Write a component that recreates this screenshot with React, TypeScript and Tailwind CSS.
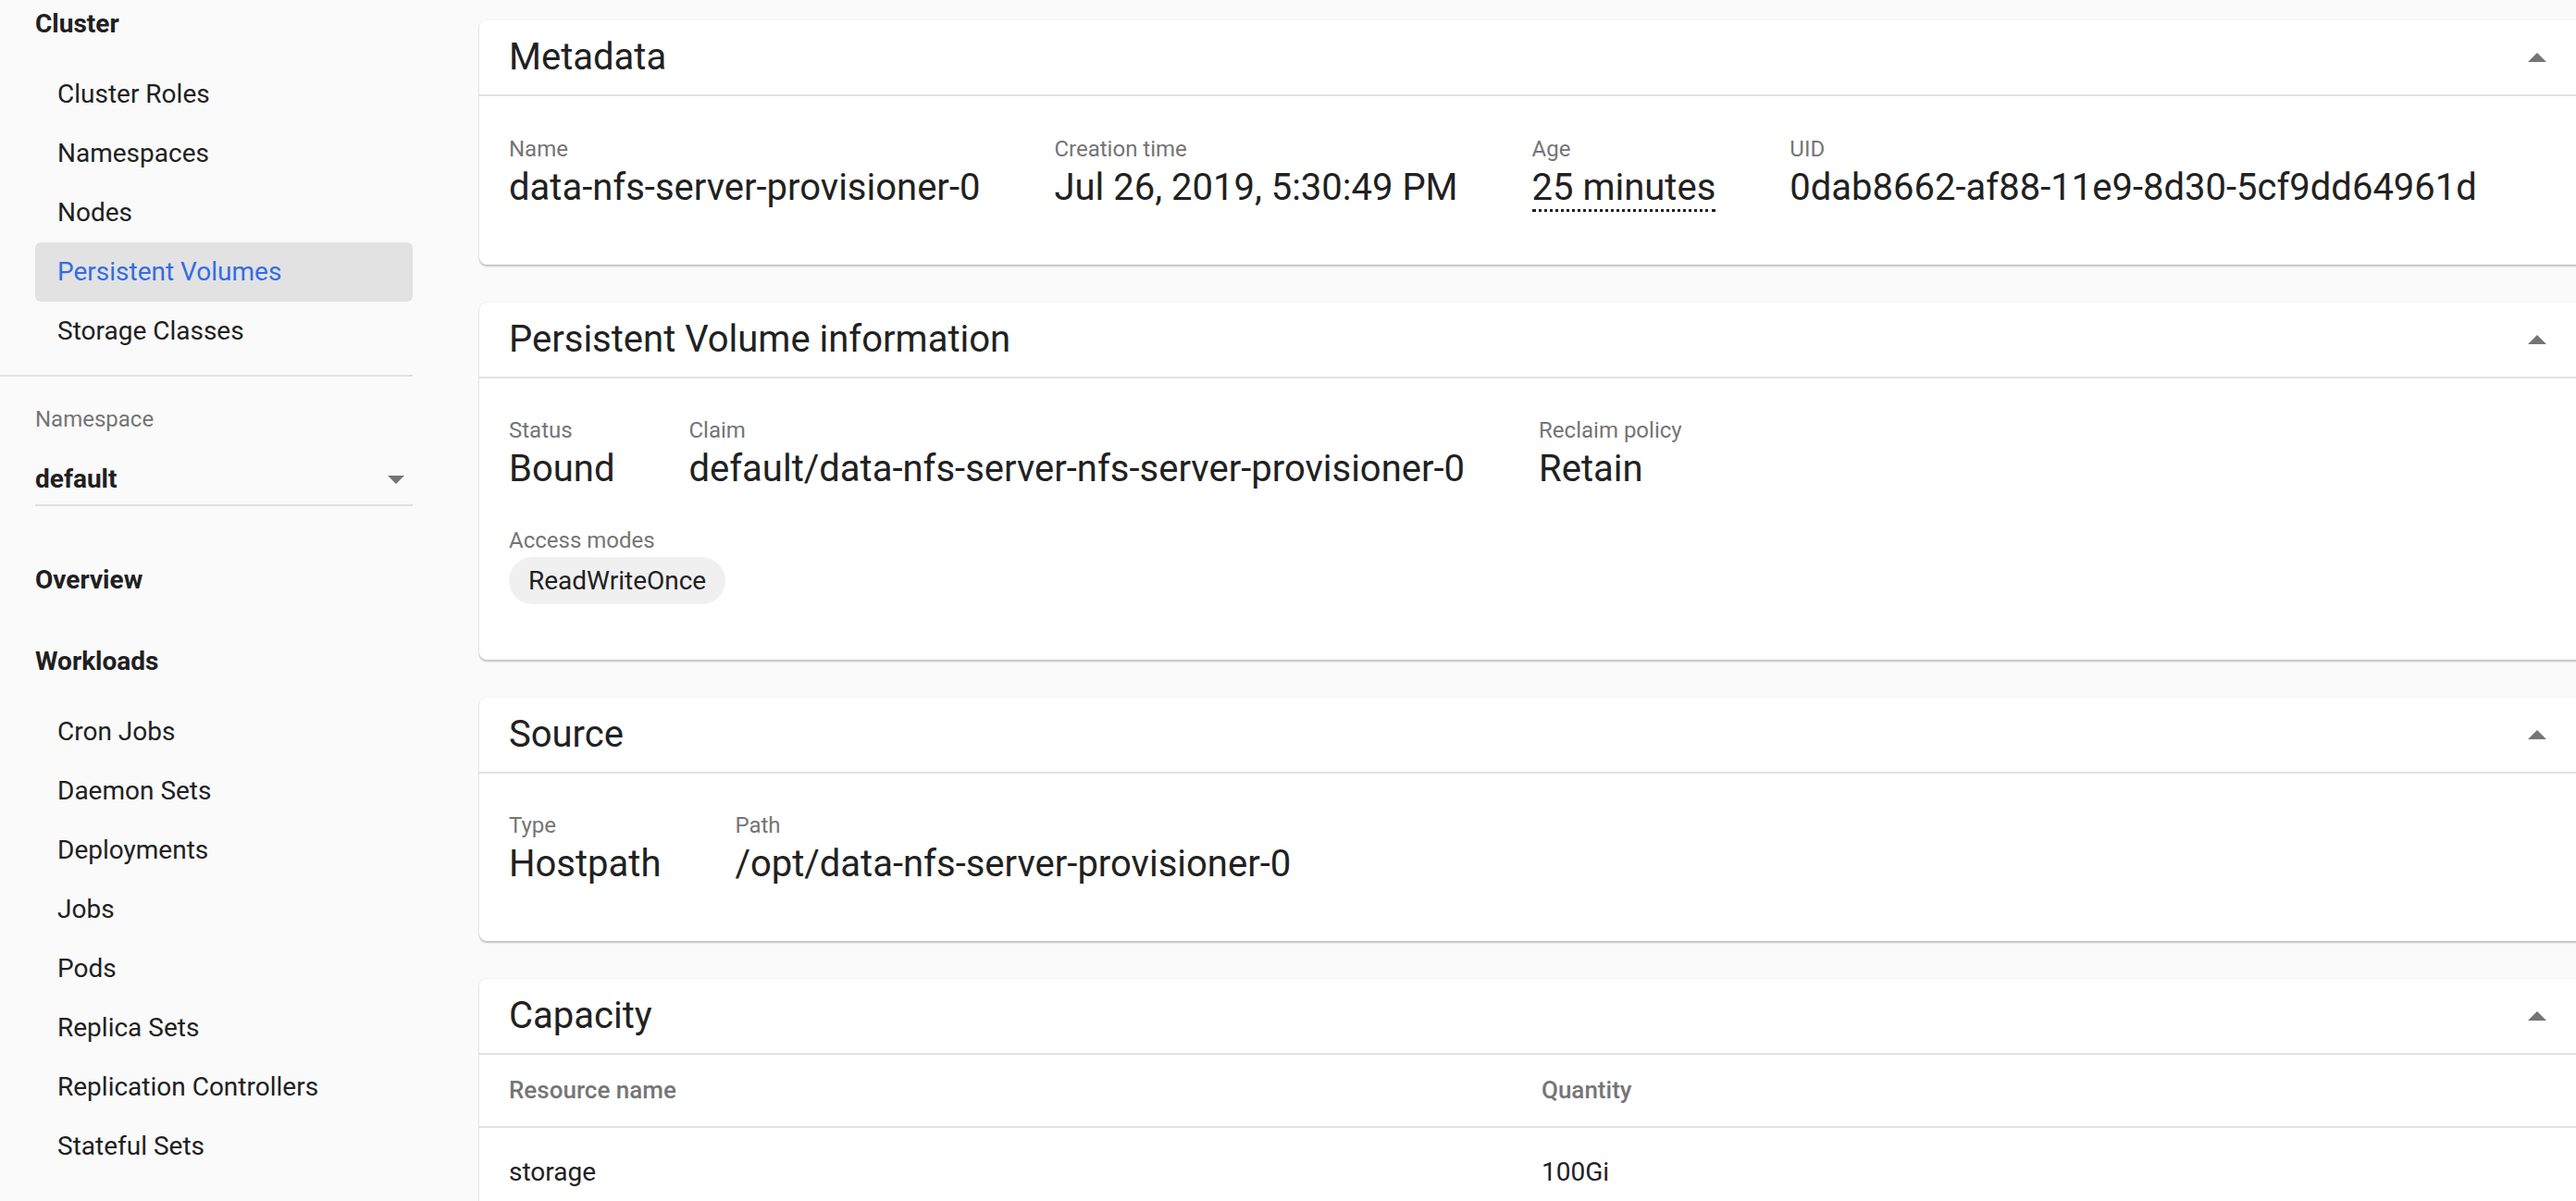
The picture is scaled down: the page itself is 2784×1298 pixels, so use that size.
import React from 'react';

const clusterItems = ['Cluster Roles', 'Namespaces', 'Nodes', 'Persistent Volumes', 'Storage Classes'];
const workloadItems = [
  'Cron Jobs',
  'Daemon Sets',
  'Deployments',
  'Jobs',
  'Pods',
  'Replica Sets',
  'Replication Controllers',
  'Stateful Sets',
];

const ArrowUp = () => (
  <div className="w-[48px] h-[48px] flex items-center justify-center">
    <svg width="20" height="10" viewBox="0 0 20 10">
      <path d="M0 10 L10 0 L20 10 Z" fill="#757575" />
    </svg>
  </div>
);

const NavItem: React.FC<{ label: string; active?: boolean }> = ({ label, active }) => (
  <div
    className={
      active
        ? 'h-[64px] flex items-center pl-[24px] rounded-[6px] bg-[#e2e2e2] text-[#326de6] text-[28px]'
        : 'h-[64px] flex items-center pl-[24px] text-[28px] text-[#212121]'
    }
  >
    {label}
  </div>
);

const Card: React.FC<{ title: string; children: React.ReactNode }> = ({ title, children }) => (
  <div className="w-[2296px] bg-white rounded-[8px] shadow-[0_2px_2px_rgba(0,0,0,0.22),0_0_2px_rgba(0,0,0,0.1)]">
    <div className="h-[80px] flex items-center justify-between pl-[32px] pr-[48px] border-b-2 border-[#e2e2e2] box-content">
      <span className="text-[40px] text-[#212121]">{title}</span>
      <ArrowUp />
    </div>
    {children}
  </div>
);

const Field: React.FC<{ label: string; children: React.ReactNode }> = ({ label, children }) => (
  <div className="flex flex-col">
    <div className="text-[24px] leading-[32px] text-[#757575]">{label}</div>
    <div className="mt-[2px] text-[40px] leading-[48px] text-[#212121] whitespace-nowrap">{children}</div>
  </div>
);

export default function App() {
  return (
    <div className="w-[2784px] h-[1298px] overflow-hidden bg-[#fafafa] flex font-['Roboto',sans-serif]">
      <aside className="w-[446px] shrink-0 flex flex-col">
        <div className="h-[52px] pl-[38px] flex items-center text-[28px] font-bold text-[#202020]">Cluster</div>
        <div className="mt-[18px] pl-[38px] flex flex-col">
          {clusterItems.map((item) => (
            <NavItem key={item} label={item} active={item === 'Persistent Volumes'} />
          ))}
        </div>
        <div className="mt-[15px] h-[2px] bg-[#e2e2e2]" />
        <div className="pl-[38px] flex flex-col">
          <div className="mt-[30px] h-[32px] flex items-center text-[24px] text-[#757575]">Namespace</div>
          <div className="mt-[22px] h-[54px] flex items-center justify-between pr-[9px] border-b-2 border-[#e2e2e2] box-content">
            <span className="text-[28px] font-bold text-[#202020]">default</span>
            <svg width="18" height="9" viewBox="0 0 18 9">
              <path d="M0 0 L18 0 L9 9 Z" fill="#757575" />
            </svg>
          </div>
          <div className="mt-[36px] h-[88px] flex items-center text-[28px] font-bold text-[#202020]">Overview</div>
          <div className="h-[88px] flex items-center text-[28px] font-bold text-[#202020]">Workloads</div>
          <div className="flex flex-col">
            {workloadItems.map((item) => (
              <NavItem key={item} label={item} />
            ))}
          </div>
        </div>
      </aside>

      <main className="flex-1 min-w-0 pl-[72px] pt-[22px]">
        <div className="flex flex-col gap-[41px]">
          <Card title="Metadata">
            <div className="pt-[41px] pb-[59px] px-[32px] flex gap-x-[80px]">
              <Field label="Name">data-nfs-server-provisioner-0</Field>
              <Field label="Creation time">Jul 26, 2019, 5:30:49 PM</Field>
              <Field label="Age">
                <span className="border-b-[3px] border-dotted border-[#212121]">25 minutes</span>
              </Field>
              <Field label="UID">0dab8662-af88-11e9-8d30-5cf9dd64961d</Field>
            </div>
          </Card>

          <Card title="Persistent Volume information">
            <div className="pt-[40px] pb-[60px] px-[32px] flex flex-col">
              <div className="flex gap-x-[80px]">
                <Field label="Status">Bound</Field>
                <Field label="Claim">default/data-nfs-server-nfs-server-provisioner-0</Field>
                <Field label="Reclaim policy">Retain</Field>
              </div>
              <div className="mt-[37px] flex flex-col items-start">
                <div className="text-[24px] leading-[32px] text-[#757575]">Access modes</div>
                <div className="mt-[2px] h-[51px] px-[21px] flex items-center rounded-full bg-[#f0f0f0] text-[28px] text-[#212121]">
                  ReadWriteOnce
                </div>
              </div>
            </div>
          </Card>

          <Card title="Source">
            <div className="pt-[40px] pb-[59px] px-[32px] flex gap-x-[80px]">
              <Field label="Type">Hostpath</Field>
              <Field label="Path">/opt/data-nfs-server-provisioner-0</Field>
            </div>
          </Card>

          <Card title="Capacity">
            <div className="flex flex-col">
              <div className="h-[77px] px-[32px] grid grid-cols-2 items-center border-b-2 border-[#e2e2e2] box-content text-[26px] font-medium text-[#757575]">
                <span>Resource name</span>
                <span>Quantity</span>
              </div>
              <div className="h-[96px] px-[32px] grid grid-cols-2 items-center text-[28px] text-[#212121]">
                <span>storage</span>
                <span>100Gi</span>
              </div>
            </div>
          </Card>
        </div>
      </main>
    </div>
  );
}
